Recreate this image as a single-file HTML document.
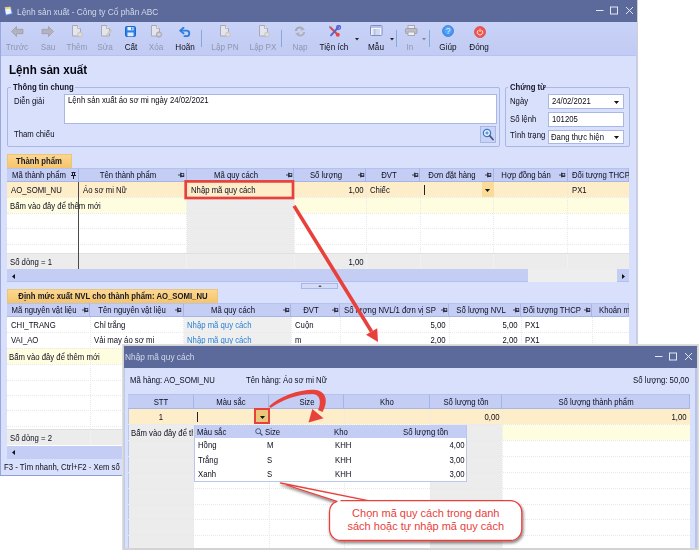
<!DOCTYPE html><html lang="vi"><head><meta charset="utf-8"><title>Lệnh sản xuất</title><style>
html,body{margin:0;padding:0;background:#fff;}
body{width:700px;height:553px;position:relative;overflow:hidden;font-family:"Liberation Sans",sans-serif;font-size:9px;color:#0c0c1c;}
div,span.t,svg{position:absolute;box-sizing:border-box;}
span.t{white-space:nowrap;line-height:11px;height:11px;transform:scaleX(0.86);transform-origin:0 50%;}
span.t.r{transform-origin:100% 50%;text-align:right;}
span.t.c{transform-origin:50% 50%;text-align:center;}
.b{font-weight:bold;}
.dis{color:#9097b0;}
.lnk{color:#2a7fd4;}
.hd{background:#c4cef5;border-right:1px solid #a6b5e6;border-bottom:1px solid #a6b5e6;border-top:1px solid #b5c2ee;}
.dot{border-top:1px dotted #e9e9e9;}
.vdot{border-left:1px dotted #e9e9e9;}
</style></head><body>
<div style="left:0px;top:0px;width:638px;height:476px;background:#cfcfd4;"></div>
<div style="left:0px;top:0px;width:637px;height:476px;background:#d9e0fb;"></div>
<div style="left:0px;top:0px;width:637px;height:21.7px;background:#5b6a9b;"></div>
<div style="left:0px;top:21.7px;width:1px;height:454.3px;background:#98a8de;"></div>
<div style="left:636px;top:56px;width:1px;height:420px;background:#c3ccf0;"></div>
<div style="left:0px;top:475px;width:637px;height:1px;background:#8f9fd6;"></div>
<svg style="left:3px;top:5.500px" width="10" height="10" viewBox="0 0 10 10"><path d="M1.500 1.500 L7.500 1 L9.300 7.500 L2.500 9.300 Z" fill="#eef4ff" stroke="#5b8ae6" stroke-width=".9"/><path d="M1.600 1.300 L7.500 .8 L7.900 2.600 L1.900 3.200 Z" fill="#f3cf55"/><path d="M2.500 9.300 L1.200 5 L1.500 1.500" fill="none" stroke="#4a5fd0" stroke-width=".9"/></svg>
<span class="t " style="left:17px;top:5.5px;color:#d3d8ea;font-size:9.7px;">Lệnh sản xuất - Công ty Cổ phần ABC</span>
<svg style="left:594px;top:3px" width="40" height="14" viewBox="0 0 40 14"><g stroke="#e3e6f4" stroke-width="1" fill="none"><path d="M2 7.500 H9.500"/><rect x="16.500" y="4" width="7" height="7"/><path d="M32 4 L39 11 M39 4 L32 11"/></g></svg>
<div style="left:1px;top:21.7px;width:636px;height:34.3px;background:linear-gradient(#c9d2f7,#c1cbf3);"></div>
<div style="left:1px;top:55px;width:635px;height:1px;background:#b7c3ee;"></div>
<span class="t c dis" style="left:-183.5px;width:400px;top:41px;font-size:9.5px;">Trước</span>
<span class="t c dis" style="left:-152.5px;width:400px;top:41px;font-size:9.5px;">Sau</span>
<span class="t c dis" style="left:-123.5px;width:400px;top:41px;font-size:9.5px;">Thêm</span>
<span class="t c dis" style="left:-95px;width:400px;top:41px;font-size:9.5px;">Sửa</span>
<span class="t c " style="left:-69.5px;width:400px;top:41px;font-size:9.5px;color:#101018;">Cất</span>
<span class="t c dis" style="left:-44px;width:400px;top:41px;font-size:9.5px;">Xóa</span>
<span class="t c " style="left:-15px;width:400px;top:41px;font-size:9.5px;color:#101018;">Hoãn</span>
<span class="t c dis" style="left:24.5px;width:400px;top:41px;font-size:9.5px;">Lập PN</span>
<span class="t c dis" style="left:63px;width:400px;top:41px;font-size:9.5px;">Lập PX</span>
<span class="t c dis" style="left:99.5px;width:400px;top:41px;font-size:9.5px;">Nạp</span>
<span class="t c " style="left:133.5px;width:400px;top:41px;font-size:9.5px;color:#101018;">Tiện ích</span>
<span class="t c " style="left:175.5px;width:400px;top:41px;font-size:9.5px;color:#101018;">Mẫu</span>
<span class="t c dis" style="left:210px;width:400px;top:41px;font-size:9.5px;">In</span>
<span class="t c " style="left:248px;width:400px;top:41px;font-size:9.5px;color:#101018;">Giúp</span>
<span class="t c " style="left:278.5px;width:400px;top:41px;font-size:9.5px;color:#101018;">Đóng</span>
<div style="left:201px;top:29.5px;width:1.2px;height:17.5px;background:#86a9dc;"></div>
<div style="left:281.3px;top:29.5px;width:1.2px;height:17.5px;background:#86a9dc;"></div>
<div style="left:396.3px;top:29.5px;width:1.2px;height:17.5px;background:#86a9dc;"></div>
<div style="left:429px;top:29.5px;width:1.2px;height:17.5px;background:#86a9dc;"></div>
<svg style="left:355px;top:38px" width="4" height="2.500" viewBox="0 0 4 2.500"><path d="M0 0 H4 L2 2.500 Z" fill="#222"/></svg>
<svg style="left:389.5px;top:38px" width="4" height="2.500" viewBox="0 0 4 2.500"><path d="M0 0 H4 L2 2.500 Z" fill="#222"/></svg>
<svg style="left:421.6px;top:38px" width="4" height="2.500" viewBox="0 0 4 2.500"><path d="M0 0 H4 L2 2.500 Z" fill="#888"/></svg>
<svg style="left:11px;top:25.5px" width="13" height="11" viewBox="0 0 13 11"><path d="M.5 5.500 L5.500 .5 V3.300 H12 V7.700 H5.500 V10.500 Z" fill="#b3b3bb" stroke="#9a9aa5" stroke-width=".7"/></svg>
<svg style="left:40.5px;top:25.5px" width="13" height="11" viewBox="0 0 13 11"><path d="M12.500 5.500 L7.500 .5 V3.300 H1 V7.700 H7.500 V10.500 Z" fill="#b3b3bb" stroke="#9a9aa5" stroke-width=".7"/></svg>
<svg style="left:71.6px;top:25px" width="12" height="13" viewBox="0 0 12 13"><path d="M.5 .5 H5.500 L8.500 3.500 V11 H.5 Z" fill="#e4e5ec" stroke="#a7a9b5" stroke-width="1"/><path d="M5.500 .5 V3.500 H8.500" fill="#f2f2f6" stroke="#a7a9b5" stroke-width=".8"/><circle cx="8" cy="9.500" r="2.400" fill="#dddcd6" stroke="#bdbcb4" stroke-width=".7"/></svg>
<svg style="left:100.5px;top:25px" width="12" height="13" viewBox="0 0 12 13"><path d="M.5 .5 H5.500 L8.500 3.500 V11 H.5 Z" fill="#e4e5ec" stroke="#a7a9b5" stroke-width="1"/><path d="M5.500 .5 V3.500 H8.500" fill="#f2f2f6" stroke="#a7a9b5" stroke-width=".8"/><path d="M5 10.500 L9.500 4.500 L10.800 5.500 L6.300 11.500 Z" fill="#d2cfc4" stroke="#b9b6aa" stroke-width=".5"/></svg>
<svg style="left:125.3px;top:26px" width="11" height="11" viewBox="0 0 11 11"><rect x=".5" y=".5" width="10" height="10" rx="1.200" fill="#2a82e8" stroke="#1a66c6"/><rect x="2.500" y="1" width="6" height="3.300" fill="#eef5ff"/><rect x="2.500" y="6.500" width="6" height="3.800" fill="#dcebff"/><rect x="6" y="1.400" width="1.500" height="2.300" fill="#2a82e8"/></svg>
<svg style="left:151px;top:25px" width="12" height="13" viewBox="0 0 12 13"><path d="M.5 .5 H5.500 L8.500 3.500 V11 H.5 Z" fill="#e4e5ec" stroke="#a7a9b5" stroke-width="1"/><path d="M5.500 .5 V3.500 H8.500" fill="#f2f2f6" stroke="#a7a9b5" stroke-width=".8"/><circle cx="8" cy="9.500" r="2.700" fill="#b9b9c1" stroke="#9c9ca6" stroke-width=".6"/><path d="M6.900 8.400 L9.100 10.600 M9.100 8.400 L6.900 10.600" stroke="#f2f2f2" stroke-width=".9"/></svg>
<svg style="left:179px;top:26.5px" width="12" height="10" viewBox="0 0 12 10"><path d="M4.500 .8 L1.200 3.600 L4.500 6.400" fill="none" stroke="#2c7fe0" stroke-width="1.900" stroke-linejoin="round" stroke-linecap="round"/><path d="M1.800 3.600 H7.500 A2.800 2.800 0 0 1 7.500 9.200 H5.500" fill="none" stroke="#2c7fe0" stroke-width="1.900" stroke-linecap="round"/></svg>
<svg style="left:220px;top:25px" width="12" height="13" viewBox="0 0 12 13"><path d="M.5 .5 H5.500 L8.500 3.500 V11 H.5 Z" fill="#e4e5ec" stroke="#a7a9b5" stroke-width="1"/><path d="M5.500 .5 V3.500 H8.500" fill="#f2f2f6" stroke="#a7a9b5" stroke-width=".8"/><circle cx="8" cy="9.500" r="2.400" fill="#dddcd6" stroke="#bdbcb4" stroke-width=".7"/></svg>
<svg style="left:258.6px;top:25px" width="12" height="13" viewBox="0 0 12 13"><path d="M.5 .5 H5.500 L8.500 3.500 V11 H.5 Z" fill="#e4e5ec" stroke="#a7a9b5" stroke-width="1"/><path d="M5.500 .5 V3.500 H8.500" fill="#f2f2f6" stroke="#a7a9b5" stroke-width=".8"/><circle cx="8" cy="9.500" r="2.400" fill="#dddcd6" stroke="#bdbcb4" stroke-width=".7"/></svg>
<svg style="left:294px;top:26px" width="12" height="11" viewBox="0 0 12 11"><path d="M1.800 5 A4 4 0 0 1 8.800 2.800" fill="none" stroke="#a6a6ae" stroke-width="1.900"/><path d="M10.200 6 A4 4 0 0 1 3.200 8.200" fill="none" stroke="#aeaeb6" stroke-width="1.900"/><path d="M7 .5 L10.800 3.600 L6.800 4.800 Z" fill="#aeaeb6"/><path d="M5 10.500 L1.200 7.400 L5.200 6.200 Z" fill="#aeaeb6"/></svg>
<svg style="left:327.5px;top:25px" width="13" height="12" viewBox="0 0 13 12"><path d="M2.200 2.200 L10 10" stroke="#e0463e" stroke-width="2" stroke-linecap="round"/><path d="M1 .8 L3.500 1.800 L2 3.500 Z" fill="#8f98ae"/><circle cx="9.800" cy="9.800" r="2" fill="#e5483f"/><path d="M10.500 2 L3 10.300" stroke="#5a63d0" stroke-width="1.900" stroke-linecap="round"/><circle cx="10.600" cy="2.400" r="1.900" fill="none" stroke="#5a63d0" stroke-width="1.300"/></svg>
<svg style="left:369.7px;top:25.3px" width="13" height="11" viewBox="0 0 13 11"><rect x=".5" y=".5" width="11.500" height="10" rx=".8" fill="#f3f5fd" stroke="#7f8cc2"/><rect x="1" y="1" width="10.500" height="2" fill="#b9c3ea"/><path d="M2.500 5 H10 M2.500 7 H10 M2.500 9 H10 M4.800 4 V9.800" stroke="#9aa6d4" stroke-width=".7"/></svg>
<svg style="left:405.3px;top:25.3px" width="13" height="11" viewBox="0 0 13 11"><rect x="3" y=".5" width="6.500" height="3.500" fill="#e9e9ee" stroke="#a9a9b3"/><rect x=".5" y="3.500" width="11.500" height="5" rx="1" fill="#bdbdc6" stroke="#a0a0aa"/><rect x="3" y="7" width="6.500" height="3.500" fill="#f0f0f4" stroke="#a9a9b3"/></svg>
<svg style="left:441.5px;top:25.2px" width="12" height="12" viewBox="0 0 12 12"><circle cx="6" cy="6" r="5.500" fill="#4496f4" stroke="#2f7ad8" stroke-width=".7"/><circle cx="6" cy="5" r="3.500" fill="#6db0fa" opacity=".55"/><text x="6" y="9" font-size="8.500" text-anchor="middle" fill="#e2f0ff" font-family="Liberation Sans, sans-serif">?</text></svg>
<svg style="left:474px;top:25.5px" width="12" height="12" viewBox="0 0 12 12"><circle cx="6" cy="6" r="5.500" fill="#f0544d" stroke="#dc433c" stroke-width=".7"/><path d="M4.300 4.200 A2.700 2.700 0 1 0 7.700 4.200" fill="none" stroke="#ffe6e4" stroke-width="1"/><path d="M6 2.800 V6" stroke="#ffe6e4" stroke-width="1"/></svg>
<span class="t b" style="left:9px;top:62.2px;font-size:13.5px;line-height:16px;height:16px;color:#05050f;">Lệnh sản xuất</span>
<div style="left:7px;top:87px;width:493px;height:60px;border:1px solid #a9b7e8;border-radius:2px;"></div>
<div style="left:11px;top:84px;width:64px;height:9px;background:#d9e0fb;"></div>
<span class="t b" style="left:13px;top:82px;color:#15172a;">Thông tin chung</span>
<span class="t " style="left:14px;top:96px;">Diễn giải</span>
<div style="left:64px;top:94px;width:433px;height:30px;background:#fff;border:1px solid #a9b7e8;"></div>
<span class="t " style="left:68px;top:95px;">Lệnh sản xuất áo sơ mi ngày 24/02/2021</span>
<span class="t " style="left:14px;top:129px;">Tham chiếu</span>
<div style="left:480px;top:126px;width:16px;height:17px;background:#c9d3f6;border:1px solid #a9b7e8;"></div>
<svg style="left:482px;top:128px" width="12" height="13" viewBox="0 0 12 13"><circle cx="5" cy="5" r="3.600" fill="#eef6ff" stroke="#3a78c8" stroke-width="1.300"/><path d="M3.300 5 H6.700 M5 3.300 V6.700" stroke="#3a78c8" stroke-width="1"/><path d="M7.800 7.800 L11 11.500" stroke="#4b5a78" stroke-width="1.800" stroke-linecap="round"/></svg>
<div style="left:505px;top:87px;width:125px;height:60px;border:1px solid #a9b7e8;border-radius:2px;"></div>
<div style="left:508px;top:84px;width:36px;height:9px;background:#d9e0fb;"></div>
<span class="t b" style="left:510px;top:82px;color:#15172a;">Chứng từ</span>
<span class="t " style="left:510px;top:96px;">Ngày</span>
<span class="t " style="left:510px;top:114px;">Số lệnh</span>
<span class="t " style="left:510px;top:130px;">Tình trạng</span>
<div style="left:548px;top:94px;width:76px;height:15px;background:#fff;border:1px solid #a9b7e8;"></div>
<div style="left:548px;top:112px;width:76px;height:15px;background:#fff;border:1px solid #a9b7e8;"></div>
<div style="left:548px;top:130px;width:76px;height:14px;background:#fff;border:1px solid #a9b7e8;"></div>
<span class="t " style="left:552px;top:96px;">24/02/2021</span>
<span class="t " style="left:552px;top:114px;">101205</span>
<span class="t " style="left:551px;top:131.5px;">Đang thực hiện</span>
<svg style="left:614px;top:100.5px" width="5" height="3" viewBox="0 0 5 3"><path d="M0 0 H5 L2.500 3 Z" fill="#111"/></svg>
<svg style="left:614px;top:135.5px" width="5" height="3" viewBox="0 0 5 3"><path d="M0 0 H5 L2.500 3 Z" fill="#111"/></svg>
<div style="left:7px;top:154px;width:64.5px;height:14px;background:linear-gradient(#fbd790,#f6c469);border:1px solid #edc47c;border-bottom:none;"></div>
<span class="t c b" style="left:-161.2px;width:400px;top:155.5px;color:#15172a;">Thành phẩm</span>
<div style="left:7px;top:168px;width:622.2px;height:114px;background:#fff;"></div>
<div class="hd" style="left:7px;top:167.5px;width:71.5px;height:14.5px;"></div>
<span class="t c " style="left:-161.25px;width:400px;top:170px;">Mã thành phẩm</span>
<svg style="left:71px;top:172px" width="5" height="7" viewBox="0 0 5 7"><path d="M.5 .5 H4.500 M1.500 .5 V3.500 M3.500 .5 V3.500 M0 3.500 H5 M2.500 3.500 V7" fill="none" stroke="#1a1a2a" stroke-width="1"/></svg>
<div class="hd" style="left:78.5px;top:167.5px;width:108.0px;height:14.5px;"></div>
<span class="t c " style="left:-72.0px;width:400px;top:170px;">Tên thành phẩm</span>
<svg style="left:178.0px;top:171.5px" width="7" height="6" viewBox="0 0 7 6"><path d="M0 3 H2.500" stroke="#222230" stroke-width=".8"/><path d="M2.700 .6 V5.400" stroke="#15151f" stroke-width=".9"/><rect x="3.100" y="1.500" width="2.700" height="2.800" fill="none" stroke="#222230" stroke-width=".7"/><path d="M2.800 4.100 H6.200" stroke="#15151f" stroke-width="1"/></svg>
<div class="hd" style="left:186.5px;top:167.5px;width:107.5px;height:14.5px;"></div>
<span class="t c " style="left:35.75px;width:400px;top:170px;">Mã quy cách</span>
<svg style="left:285.5px;top:171.5px" width="7" height="6" viewBox="0 0 7 6"><path d="M0 3 H2.500" stroke="#222230" stroke-width=".8"/><path d="M2.700 .6 V5.400" stroke="#15151f" stroke-width=".9"/><rect x="3.100" y="1.500" width="2.700" height="2.800" fill="none" stroke="#222230" stroke-width=".7"/><path d="M2.800 4.100 H6.200" stroke="#15151f" stroke-width="1"/></svg>
<div class="hd" style="left:294px;top:167.5px;width:72px;height:14.5px;"></div>
<span class="t c " style="left:125.5px;width:400px;top:170px;">Số lượng</span>
<svg style="left:357.5px;top:171.5px" width="7" height="6" viewBox="0 0 7 6"><path d="M0 3 H2.500" stroke="#222230" stroke-width=".8"/><path d="M2.700 .6 V5.400" stroke="#15151f" stroke-width=".9"/><rect x="3.100" y="1.500" width="2.700" height="2.800" fill="none" stroke="#222230" stroke-width=".7"/><path d="M2.800 4.100 H6.200" stroke="#15151f" stroke-width="1"/></svg>
<div class="hd" style="left:366px;top:167.5px;width:54px;height:14.5px;"></div>
<span class="t c " style="left:188.5px;width:400px;top:170px;">ĐVT</span>
<svg style="left:411.5px;top:171.5px" width="7" height="6" viewBox="0 0 7 6"><path d="M0 3 H2.500" stroke="#222230" stroke-width=".8"/><path d="M2.700 .6 V5.400" stroke="#15151f" stroke-width=".9"/><rect x="3.100" y="1.500" width="2.700" height="2.800" fill="none" stroke="#222230" stroke-width=".7"/><path d="M2.800 4.100 H6.200" stroke="#15151f" stroke-width="1"/></svg>
<div class="hd" style="left:420px;top:167.5px;width:73.5px;height:14.5px;"></div>
<span class="t c " style="left:252.25px;width:400px;top:170px;">Đơn đặt hàng</span>
<svg style="left:485.0px;top:171.5px" width="7" height="6" viewBox="0 0 7 6"><path d="M0 3 H2.500" stroke="#222230" stroke-width=".8"/><path d="M2.700 .6 V5.400" stroke="#15151f" stroke-width=".9"/><rect x="3.100" y="1.500" width="2.700" height="2.800" fill="none" stroke="#222230" stroke-width=".7"/><path d="M2.800 4.100 H6.200" stroke="#15151f" stroke-width="1"/></svg>
<div class="hd" style="left:493.5px;top:167.5px;width:74.0px;height:14.5px;"></div>
<span class="t c " style="left:326.0px;width:400px;top:170px;">Hợp đồng bán</span>
<svg style="left:559.0px;top:171.5px" width="7" height="6" viewBox="0 0 7 6"><path d="M0 3 H2.500" stroke="#222230" stroke-width=".8"/><path d="M2.700 .6 V5.400" stroke="#15151f" stroke-width=".9"/><rect x="3.100" y="1.500" width="2.700" height="2.800" fill="none" stroke="#222230" stroke-width=".7"/><path d="M2.800 4.100 H6.200" stroke="#15151f" stroke-width="1"/></svg>
<div class="hd" style="left:567.5px;top:167.5px;width:61.700000000000045px;height:14.5px;"></div>
<span class="t " style="left:572px;top:170px;">Đối tượng THCP</span>
<div style="left:7px;top:182px;width:622.2px;height:15.3px;background:#fdedc8;"></div>
<div style="left:7px;top:197.3px;width:622.2px;height:15.4px;background:#fffde0;"></div>
<div style="left:186.5px;top:197.3px;width:107.5px;height:55.7px;background:#ececec;"></div>
<div class="dot" style="left:7px;top:197px;width:622.2px;height:1px;"></div>
<div class="dot" style="left:7px;top:212.5px;width:622.2px;height:1px;"></div>
<div class="dot" style="left:7px;top:228px;width:622.2px;height:1px;"></div>
<div class="dot" style="left:7px;top:243.5px;width:622.2px;height:1px;"></div>
<div class="vdot" style="left:78.0px;top:182px;width:1px;height:71px;"></div>
<div class="vdot" style="left:186.0px;top:182px;width:1px;height:71px;"></div>
<div class="vdot" style="left:293.5px;top:182px;width:1px;height:71px;"></div>
<div class="vdot" style="left:365.5px;top:182px;width:1px;height:71px;"></div>
<div class="vdot" style="left:419.5px;top:182px;width:1px;height:71px;"></div>
<div class="vdot" style="left:493.0px;top:182px;width:1px;height:71px;"></div>
<div class="vdot" style="left:567.0px;top:182px;width:1px;height:71px;"></div>
<div style="left:7px;top:253px;width:622.2px;height:16px;background:#ececec;border-top:1px solid #e0e0e0;"></div>
<div style="left:78.0px;top:254px;width:1px;height:15px;background:#f1f1f1;"></div>
<div style="left:186.0px;top:254px;width:1px;height:15px;background:#f1f1f1;"></div>
<div style="left:293.5px;top:254px;width:1px;height:15px;background:#f1f1f1;"></div>
<div style="left:365.5px;top:254px;width:1px;height:15px;background:#f1f1f1;"></div>
<div style="left:419.5px;top:254px;width:1px;height:15px;background:#f1f1f1;"></div>
<div style="left:493.0px;top:254px;width:1px;height:15px;background:#f1f1f1;"></div>
<div style="left:567.0px;top:254px;width:1px;height:15px;background:#f1f1f1;"></div>
<div style="left:78px;top:182px;width:1px;height:87px;background:#4a4a4a;"></div>
<span class="t " style="left:11.3px;top:185px;">AO_SOMI_NU</span>
<span class="t " style="left:83px;top:185px;">Áo sơ mi Nữ</span>
<span class="t " style="left:191px;top:185px;">Nhập mã quy cách</span>
<span class="t r " style="right:336px;top:185px;">1,00</span>
<span class="t " style="left:370px;top:185px;">Chiếc</span>
<span class="t " style="left:572px;top:185px;">PX1</span>
<div style="left:423.5px;top:185px;width:1px;height:10px;background:#222;"></div>
<div style="left:481.5px;top:182px;width:12px;height:15.3px;background:#fbdb98;"></div>
<svg style="left:485px;top:188.5px" width="5" height="3" viewBox="0 0 5 3"><path d="M0 0 H5 L2.500 3 Z" fill="#111"/></svg>
<span class="t " style="left:9.8px;top:200.7px;">Bấm vào đây để thêm mới</span>
<span class="t " style="left:10px;top:256.6px;">Số dòng = 1</span>
<span class="t r " style="right:336px;top:256.6px;">1,00</span>
<div style="left:7px;top:269.4px;width:622.2px;height:13px;background:#c4cef5;border-bottom:1px solid #b3c0ee;"></div>
<div style="left:528px;top:269.4px;width:89px;height:13px;background:#eeeeee;"></div>
<svg style="left:12px;top:274px" width="3" height="5" viewBox="0 0 3 5"><path d="M3 0 V5 L0 2.500 Z" fill="#111"/></svg>
<svg style="left:621.5px;top:273.7px" width="3" height="5" viewBox="0 0 3 5"><path d="M0 0 V5 L3 2.500 Z" fill="#111"/></svg>
<div style="left:301px;top:283px;width:36.5px;height:5.5px;background:#d3dbf9;border:1px solid #a9b7e8;"></div>
<svg style="left:317.5px;top:284.8px" width="4" height="2.2" viewBox="0 0 4 2.2"><path d="M0 2.200 H4 L2 0 Z" fill="#555"/></svg>
<div style="left:7px;top:289px;width:211px;height:14px;background:linear-gradient(#fbd790,#f6c469);border:1px solid #edc47c;border-bottom:none;"></div>
<span class="t c b" style="left:-87.5px;width:400px;top:290.5px;color:#15172a;">Định mức xuất NVL cho thành phẩm: AO_SOMI_NU</span>
<div style="left:7px;top:303px;width:622.2px;height:156px;background:#fff;"></div>
<div class="hd" style="left:7px;top:302.7px;width:83px;height:14.5px;"></div>
<span class="t c " style="left:-156.0px;width:400px;top:304.8px;">Mã nguyên vật liệu</span>
<svg style="left:81.5px;top:306.5px" width="7" height="6" viewBox="0 0 7 6"><path d="M0 3 H2.500" stroke="#222230" stroke-width=".8"/><path d="M2.700 .6 V5.400" stroke="#15151f" stroke-width=".9"/><rect x="3.100" y="1.500" width="2.700" height="2.800" fill="none" stroke="#222230" stroke-width=".7"/><path d="M2.800 4.100 H6.200" stroke="#15151f" stroke-width="1"/></svg>
<div class="hd" style="left:90px;top:302.7px;width:93.5px;height:14.5px;"></div>
<span class="t c " style="left:-67.75px;width:400px;top:304.8px;">Tên nguyên vật liệu</span>
<svg style="left:175.0px;top:306.5px" width="7" height="6" viewBox="0 0 7 6"><path d="M0 3 H2.500" stroke="#222230" stroke-width=".8"/><path d="M2.700 .6 V5.400" stroke="#15151f" stroke-width=".9"/><rect x="3.100" y="1.500" width="2.700" height="2.800" fill="none" stroke="#222230" stroke-width=".7"/><path d="M2.800 4.100 H6.200" stroke="#15151f" stroke-width="1"/></svg>
<div class="hd" style="left:183.5px;top:302.7px;width:107.5px;height:14.5px;"></div>
<span class="t c " style="left:32.75px;width:400px;top:304.8px;">Mã quy cách</span>
<svg style="left:282.5px;top:306.5px" width="7" height="6" viewBox="0 0 7 6"><path d="M0 3 H2.500" stroke="#222230" stroke-width=".8"/><path d="M2.700 .6 V5.400" stroke="#15151f" stroke-width=".9"/><rect x="3.100" y="1.500" width="2.700" height="2.800" fill="none" stroke="#222230" stroke-width=".7"/><path d="M2.800 4.100 H6.200" stroke="#15151f" stroke-width="1"/></svg>
<div class="hd" style="left:291px;top:302.7px;width:49px;height:14.5px;"></div>
<span class="t c " style="left:111.0px;width:400px;top:304.8px;">ĐVT</span>
<svg style="left:331.5px;top:306.5px" width="7" height="6" viewBox="0 0 7 6"><path d="M0 3 H2.500" stroke="#222230" stroke-width=".8"/><path d="M2.700 .6 V5.400" stroke="#15151f" stroke-width=".9"/><rect x="3.100" y="1.500" width="2.700" height="2.800" fill="none" stroke="#222230" stroke-width=".7"/><path d="M2.800 4.100 H6.200" stroke="#15151f" stroke-width="1"/></svg>
<div class="hd" style="left:340px;top:302.7px;width:109px;height:14.5px;"></div>
<span class="t c " style="left:190.0px;width:400px;top:304.8px;">Số lượng NVL/1 đơn vị SP</span>
<svg style="left:440.5px;top:306.5px" width="7" height="6" viewBox="0 0 7 6"><path d="M0 3 H2.500" stroke="#222230" stroke-width=".8"/><path d="M2.700 .6 V5.400" stroke="#15151f" stroke-width=".9"/><rect x="3.100" y="1.500" width="2.700" height="2.800" fill="none" stroke="#222230" stroke-width=".7"/><path d="M2.800 4.100 H6.200" stroke="#15151f" stroke-width="1"/></svg>
<div class="hd" style="left:449px;top:302.7px;width:72px;height:14.5px;"></div>
<span class="t c " style="left:280.5px;width:400px;top:304.8px;">Số lượng NVL</span>
<svg style="left:512.5px;top:306.5px" width="7" height="6" viewBox="0 0 7 6"><path d="M0 3 H2.500" stroke="#222230" stroke-width=".8"/><path d="M2.700 .6 V5.400" stroke="#15151f" stroke-width=".9"/><rect x="3.100" y="1.500" width="2.700" height="2.800" fill="none" stroke="#222230" stroke-width=".7"/><path d="M2.800 4.100 H6.200" stroke="#15151f" stroke-width="1"/></svg>
<div class="hd" style="left:521px;top:302.7px;width:71px;height:14.5px;"></div>
<span class="t c " style="left:352.0px;width:400px;top:304.8px;">Đối tượng THCP</span>
<svg style="left:583.5px;top:306.5px" width="7" height="6" viewBox="0 0 7 6"><path d="M0 3 H2.500" stroke="#222230" stroke-width=".8"/><path d="M2.700 .6 V5.400" stroke="#15151f" stroke-width=".9"/><rect x="3.100" y="1.500" width="2.700" height="2.800" fill="none" stroke="#222230" stroke-width=".7"/><path d="M2.800 4.100 H6.200" stroke="#15151f" stroke-width="1"/></svg>
<div class="hd" style="left:592px;top:302.7px;width:37.200000000000045px;height:14.5px;"></div>
<span class="t " style="left:598.5px;top:304.8px;">Khoản m</span>
<div style="left:183.5px;top:317.2px;width:107.5px;height:30.8px;background:#efefef;"></div>
<div style="left:7px;top:348px;width:622.2px;height:16.2px;background:#fffde0;"></div>
<div class="dot" style="left:7px;top:332.4px;width:622.2px;height:1px;"></div>
<div class="dot" style="left:7px;top:347.8px;width:622.2px;height:1px;"></div>
<div class="dot" style="left:7px;top:364.2px;width:622.2px;height:1px;"></div>
<div class="dot" style="left:7px;top:379.6px;width:622.2px;height:1px;"></div>
<div class="dot" style="left:7px;top:395px;width:622.2px;height:1px;"></div>
<div class="dot" style="left:7px;top:410.4px;width:622.2px;height:1px;"></div>
<div class="dot" style="left:7px;top:425.8px;width:622.2px;height:1px;"></div>
<div class="vdot" style="left:89.5px;top:317.2px;width:1px;height:112px;"></div>
<div class="vdot" style="left:183.0px;top:317.2px;width:1px;height:112px;"></div>
<div class="vdot" style="left:290.5px;top:317.2px;width:1px;height:112px;"></div>
<div class="vdot" style="left:339.5px;top:317.2px;width:1px;height:112px;"></div>
<div class="vdot" style="left:448.5px;top:317.2px;width:1px;height:112px;"></div>
<div class="vdot" style="left:520.5px;top:317.2px;width:1px;height:112px;"></div>
<div class="vdot" style="left:591.5px;top:317.2px;width:1px;height:112px;"></div>
<span class="t " style="left:11px;top:319.7px;">CHI_TRANG</span>
<span class="t " style="left:93.5px;top:319.7px;">Chỉ trắng</span>
<span class="t lnk" style="left:187px;top:319.7px;">Nhập mã quy cách</span>
<span class="t " style="left:295px;top:319.7px;">Cuộn</span>
<span class="t r " style="right:254px;top:319.7px;">5,00</span>
<span class="t r " style="right:182px;top:319.7px;">5,00</span>
<span class="t " style="left:525px;top:319.7px;">PX1</span>
<span class="t " style="left:11px;top:335.4px;">VAI_AO</span>
<span class="t " style="left:93.5px;top:335.4px;">Vải may áo sơ mi</span>
<span class="t lnk" style="left:187px;top:335.4px;">Nhập mã quy cách</span>
<span class="t " style="left:295px;top:335.4px;">m</span>
<span class="t r " style="right:254px;top:335.4px;">2,00</span>
<span class="t r " style="right:182px;top:335.4px;">2,00</span>
<span class="t " style="left:525px;top:335.4px;">PX1</span>
<span class="t " style="left:9px;top:351.5px;">Bấm vào đây để thêm mới</span>
<div style="left:7px;top:429.3px;width:622.2px;height:16.2px;background:#ececec;border-top:1px solid #e0e0e0;"></div>
<div style="left:89.5px;top:430.3px;width:1px;height:15px;background:#f1f1f1;"></div>
<div style="left:183.0px;top:430.3px;width:1px;height:15px;background:#f1f1f1;"></div>
<div style="left:290.5px;top:430.3px;width:1px;height:15px;background:#f1f1f1;"></div>
<div style="left:339.5px;top:430.3px;width:1px;height:15px;background:#f1f1f1;"></div>
<div style="left:448.5px;top:430.3px;width:1px;height:15px;background:#f1f1f1;"></div>
<div style="left:520.5px;top:430.3px;width:1px;height:15px;background:#f1f1f1;"></div>
<div style="left:591.5px;top:430.3px;width:1px;height:15px;background:#f1f1f1;"></div>
<span class="t " style="left:10px;top:433px;">Số dòng = 2</span>
<div style="left:7px;top:445.5px;width:622.2px;height:13.5px;background:#c4cef5;"></div>
<svg style="left:12px;top:450px" width="3" height="5" viewBox="0 0 3 5"><path d="M3 0 V5 L0 2.500 Z" fill="#111"/></svg>
<div style="left:629.2px;top:150px;width:6.7999999999999545px;height:312px;background:#d9e0fb;"></div>
<span class="t " style="left:4px;top:462.3px;">F3 - Tìm nhanh, Ctrl+F2 - Xem số</span>
<svg style="left:0;top:0" width="700" height="553" viewBox="0 0 700 553"><path d="M294.050 205.900 L371.500 331.500" stroke="#e8413c" stroke-width="3.600" fill="none"/><path d="M378 342 L366 334.800 L377.200 328.300 Z" fill="#e8413c"/></svg>
<div style="left:122px;top:344.0px;width:576.5px;height:206.0px;background:#dedede;"></div>
<div style="left:122.5px;top:344.5px;width:575.5px;height:205.0px;background:#d3d3d3;"></div>
<div style="left:124px;top:345.5px;width:573px;height:202.5px;background:#d9e0fb;border-left:1.500px solid #bfcaf2;border-right:2px solid #b7c3ef;"></div>
<div style="left:124px;top:345.5px;width:573px;height:22.3px;background:#5b6a9b;"></div>
<span class="t " style="left:125px;top:351px;color:#d3d8ea;font-size:9.7px;">Nhập mã quy cách</span>
<svg style="left:653px;top:349px" width="40" height="14" viewBox="0 0 40 14"><g stroke="#e3e6f4" stroke-width="1" fill="none"><path d="M2 7.500 H9.500"/><rect x="16.500" y="4" width="7" height="7"/><path d="M32 4 L39 11 M39 4 L32 11"/></g></svg>
<span class="t " style="left:130px;top:375px;">Mã hàng: AO_SOMI_NU</span>
<span class="t " style="left:246px;top:375px;">Tên hàng: Áo sơ mi Nữ</span>
<span class="t r " style="right:11.200000000000045px;top:375px;">Số lượng: 50,00</span>
<div style="left:128px;top:394px;width:561.5px;height:154px;background:#fff;"></div>
<div class="hd" style="left:128px;top:394.4px;width:65.5px;height:14.4px;"></div>
<span class="t c " style="left:-39.25px;width:400px;top:397.3px;">STT</span>
<div class="hd" style="left:193.5px;top:394.4px;width:75.5px;height:14.4px;"></div>
<span class="t c " style="left:31.25px;width:400px;top:397.3px;">Màu sắc</span>
<div class="hd" style="left:269px;top:394.4px;width:75px;height:14.4px;"></div>
<span class="t c " style="left:106.5px;width:400px;top:397.3px;">Size</span>
<div class="hd" style="left:344px;top:394.4px;width:86px;height:14.4px;"></div>
<span class="t c " style="left:187.0px;width:400px;top:397.3px;">Kho</span>
<div class="hd" style="left:430px;top:394.4px;width:72px;height:14.4px;"></div>
<span class="t c " style="left:266.0px;width:400px;top:397.3px;">Số lượng tồn</span>
<div class="hd" style="left:502px;top:394.4px;width:187.5px;height:14.4px;"></div>
<span class="t c " style="left:395.75px;width:400px;top:397.3px;">Số lượng thành phẩm</span>
<div style="left:128px;top:408.8px;width:561.5px;height:15.4px;background:#fdedc8;"></div>
<div style="left:128px;top:424.2px;width:561.5px;height:15.8px;background:#fffde0;"></div>
<div style="left:128px;top:424.2px;width:65.5px;height:123.8px;background:#ececec;"></div>
<div style="left:128px;top:409px;width:1px;height:139px;background:#bcc7f0;"></div>
<div style="left:430px;top:424.2px;width:72px;height:123.8px;background:#ececec;"></div>
<div class="dot" style="left:128px;top:424.2px;width:561.5px;height:1px;"></div>
<div class="dot" style="left:128px;top:440.1px;width:561.5px;height:1px;"></div>
<div class="dot" style="left:128px;top:455.9px;width:561.5px;height:1px;"></div>
<div class="dot" style="left:128px;top:471.8px;width:561.5px;height:1px;"></div>
<div class="dot" style="left:128px;top:487.7px;width:561.5px;height:1px;"></div>
<div class="dot" style="left:128px;top:503.5px;width:561.5px;height:1px;"></div>
<div class="dot" style="left:128px;top:519.4px;width:561.5px;height:1px;"></div>
<div class="dot" style="left:128px;top:535.3px;width:561.5px;height:1px;"></div>
<div class="vdot" style="left:193.0px;top:408.8px;width:1px;height:139.2px;"></div>
<div class="vdot" style="left:268.5px;top:408.8px;width:1px;height:139.2px;"></div>
<div class="vdot" style="left:343.5px;top:408.8px;width:1px;height:139.2px;"></div>
<div class="vdot" style="left:429.5px;top:408.8px;width:1px;height:139.2px;"></div>
<div class="vdot" style="left:501.5px;top:408.8px;width:1px;height:139.2px;"></div>
<span class="t c " style="left:-39.5px;width:400px;top:411.8px;">1</span>
<div style="left:197px;top:411.5px;width:1px;height:10px;background:#222;"></div>
<span class="t r " style="right:200px;top:411.8px;">0,00</span>
<span class="t r " style="right:13px;top:411.8px;">1,00</span>
<div style="left:128px;top:426px;width:65px;height:13px;overflow:hidden;background:none"><span class="t" style="left:2.500px;top:1.500px">Bấm vào đây để thêm mới</span></div>
<div style="left:254.2px;top:408.2px;width:15.8px;height:15.6px;background:#e9c67a;border:2px solid #e8413c;"></div>
<svg style="left:260.3px;top:415.6px" width="5" height="3" viewBox="0 0 5 3"><path d="M0 0 H5 L2.500 3 Z" fill="#111"/></svg>
<div style="left:193.5px;top:424.5px;width:273.3px;height:57px;background:#fff;border:1px solid #b9c8e8;"></div>
<div style="left:194.5px;top:425px;width:271.3px;height:13px;background:#c4cef5;"></div>
<span class="t " style="left:196.5px;top:426.8px;">Màu sắc</span>
<span class="t " style="left:265px;top:426.8px;">Size</span>
<span class="t " style="left:334px;top:426.8px;">Kho</span>
<span class="t " style="left:403px;top:426.8px;">Số lượng tồn</span>
<svg style="left:255px;top:428px" width="8" height="8" viewBox="0 0 8 8"><circle cx="3.200" cy="3.200" r="2.500" fill="none" stroke="#4a5a80" stroke-width="1"/><path d="M5 5 L7.500 7.500" stroke="#4a5a80" stroke-width="1.200"/></svg>
<span class="t " style="left:198px;top:440.4px;">Hồng</span>
<span class="t " style="left:267px;top:440.4px;">M</span>
<span class="t " style="left:335px;top:440.4px;">KHH</span>
<span class="t r " style="right:235px;top:440.4px;">4,00</span>
<span class="t " style="left:198px;top:454.5px;">Trắng</span>
<span class="t " style="left:267px;top:454.5px;">S</span>
<span class="t " style="left:335px;top:454.5px;">KHH</span>
<span class="t r " style="right:235px;top:454.5px;">3,00</span>
<span class="t " style="left:198px;top:468.59999999999997px;">Xanh</span>
<span class="t " style="left:267px;top:468.59999999999997px;">S</span>
<span class="t " style="left:335px;top:468.59999999999997px;">KHH</span>
<span class="t r " style="right:235px;top:468.59999999999997px;">3,00</span>
<svg style="left:0;top:0" width="700" height="553" viewBox="0 0 700 553">
<defs><filter id="sh" x="-10%" y="-20%" width="120%" height="150%"><feGaussianBlur in="SourceAlpha" stdDeviation="1.500"/><feOffset dx="1" dy="2"/><feComponentTransfer><feFuncA type="linear" slope=".5"/></feComponentTransfer><feMerge><feMergeNode/><feMergeNode in="SourceGraphic"/></feMerge></filter></defs>
<rect x="185.700" y="181.400" width="107.300" height="16.600" fill="none" stroke="#e8413c" stroke-width="2.700"/>
<path d="M269 406.300 C280 396 300 389.300 314 389.800 C325 390.300 329.500 400 322.500 412 L318 410 C322 401.500 319.500 394.500 313 394 C300 393.600 283 399 270.500 408 Z" fill="#e8413c"/>
<path d="M308.500 422.500 L312.300 409 L323.500 418.300 Z" fill="#e8413c"/>
<path d="M341 500.700 H510.300 A11.500 11.500 0 0 1 521.800 512.200 V529 A11.500 11.500 0 0 1 510.300 540.500 H341 A11.500 11.500 0 0 1 329.500 529 V512.200 A11.500 11.500 0 0 1 337 501.400 L280.400 483 L368 500.700 Z" fill="#fff" stroke="#e8413c" stroke-width="1.300" stroke-linejoin="round" filter="url(#sh)"/>
<text x="425.800" y="516.500" text-anchor="middle" font-size="11" fill="#e8413c" font-family="Liberation Sans, sans-serif">Chọn mã quy cách trong danh</text>
<text x="425.800" y="529.500" text-anchor="middle" font-size="11" fill="#e8413c" font-family="Liberation Sans, sans-serif">sách hoặc tự nhập mã quy cách</text>
</svg>
</body></html>
